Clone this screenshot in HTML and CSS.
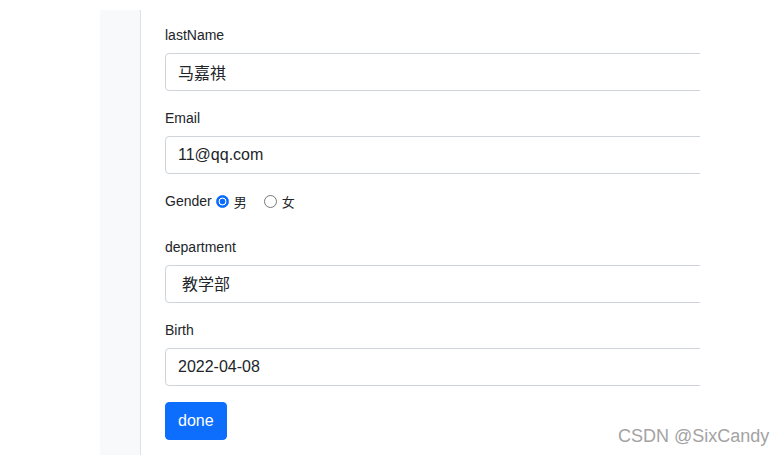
FILE: index.html
```html
<!DOCTYPE html>
<html lang="en">
<head>
    <meta charset="UTF-8">
    <meta name="viewport" content="width=device-width, initial-scale=1.0">
    <title>Edit Employee</title>
    <link rel="stylesheet" href="styles.css">
</head>
<body>
    <div class="page">
        <div class="sidebar"></div>
        <form class="main">
            <div class="form-group">
                <label class="form-label">lastName</label>
                <input class="form-control" type="text" value="马嘉祺">
            </div>
            <div class="form-group">
                <label class="form-label">Email</label>
                <input class="form-control" type="text" value="11@qq.com">
            </div>
            <div class="gender-row">
                <span class="gender-label">Gender</span>
                <input class="radio" type="radio" name="gender" checked><span class="radio-text">男</span>
                <input class="radio second" type="radio" name="gender"><span class="radio-text">女</span>
            </div>
            <div class="form-group">
                <label class="form-label">department</label>
                <select class="form-control select">
                    <option>教学部</option>
                </select>
            </div>
            <div class="form-group last">
                <label class="form-label">Birth</label>
                <input class="form-control" type="text" value="2022-04-08">
            </div>
            <button class="btn-primary" type="button">done</button>
        </form>
    </div>
    <div class="watermark">CSDN @SixCandy</div>
</body>
</html>
```

FILE: styles.css
```css
body {
    margin: 0;
    font-family: "Liberation Sans", Arial, "Noto Sans CJK SC", sans-serif;
    color: #212529;
    background-color: #fff;
}
.page {
    display: flex;
    width: 700px;
    height: 457px;
    padding-left: 100px;
    box-sizing: border-box;
    overflow: hidden;
}
.sidebar {
    width: 40px;
    margin-top: 10px;
    height: 445px;
    background-color: #f8f9fa;
    border-right: 1px solid #dee2e6;
}
.main {
    flex: 1;
    padding: 25px 0 0 24px;
    min-width: 0;
}
.form-group {
    margin-bottom: 17px;
}
.form-group.last {
    margin-bottom: 16px;
}
.form-label {
    display: block;
    font-size: 14px;
    line-height: 20px;
    margin-bottom: 8px;
}
.form-control {
    display: block;
    width: 620px;
    height: 38px;
    box-sizing: border-box;
    padding: 6px 12px;
    font-family: "Liberation Sans", Arial, "Noto Sans CJK SC", sans-serif;
    font-size: 16px;
    color: #212529;
    background-color: #fff;
    border: 1px solid #ced4da;
    border-radius: 4px;
    outline: none;
}
.select {
    appearance: none;
    padding-left: 16px;
}
.gender-row {
    display: flex;
    align-items: center;
    height: 20px;
    font-size: 14px;
    margin-bottom: 26px;
}
.radio {
    appearance: none;
    width: 13px;
    height: 13px;
    margin: 0 5px 0 4px;
    border: 1px solid #767676;
    border-radius: 50%;
    box-sizing: border-box;
    background-color: #fff;
}
.radio:checked {
    border-color: #0a6cff;
    background: radial-gradient(circle, #0a6cff 0 2.6px, #fff 3.2px 3.6px, #0a6cff 4.2px);
}
.radio.second {
    margin-left: 17px;
    margin-right: 5px;
}
.radio-text {
    font-family: "Noto Sans CJK SC", sans-serif;
    font-size: 13px;
}
.btn-primary {
    display: block;
    height: 38px;
    padding: 6px 12px;
    font-family: "Liberation Sans", Arial, sans-serif;
    font-size: 16px;
    color: #fff;
    background-color: #0d6efd;
    border: 1px solid #0d6efd;
    border-radius: 4px;
}
.watermark {
    position: absolute;
    left: 618px;
    top: 426px;
    font-family: "Liberation Sans", Arial, sans-serif;
    font-size: 18px;
    color: #a3a3a3;
    text-shadow: 0 0 1px #fff;
}
```
